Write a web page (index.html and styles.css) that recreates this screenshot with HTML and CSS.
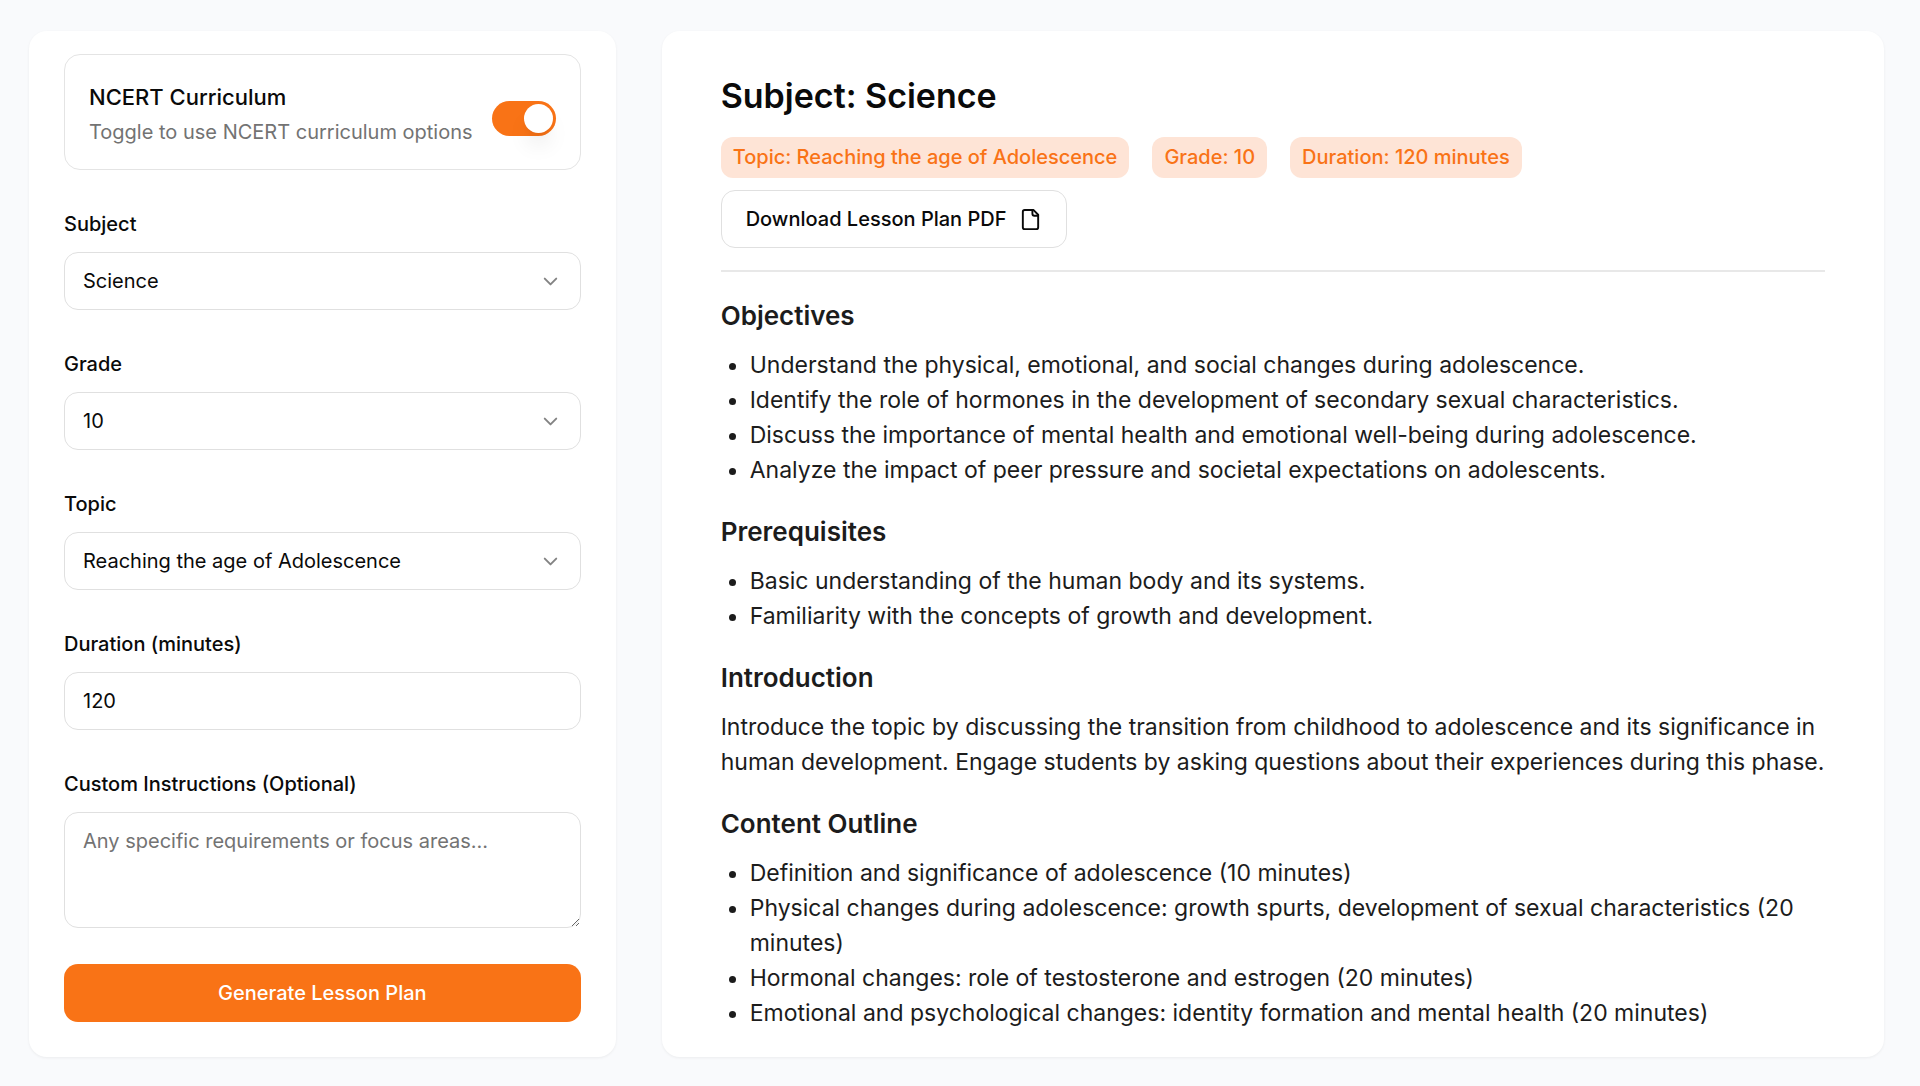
FILE: index.html
```html
<!DOCTYPE html>
<html lang="en">
<head>
    <meta charset="UTF-8">
    <meta name="viewport" content="width=device-width, initial-scale=1.0">
    <title>Lesson Plan Generator</title>
    <link rel="stylesheet" href="styles.css">
</head>
<body>
    <main class="layout">
        <form class="card form-card">
            <div class="curriculum">
                <div>
                    <label class="curriculum-title" for="ncert">NCERT Curriculum</label>
                    <p class="curriculum-hint" id="ncertHint">Toggle to use NCERT curriculum options</p>
                </div>
                <input type="checkbox" role="switch" class="switch" id="ncert" aria-describedby="ncertHint" checked>
            </div>

            <div class="field">
                <label for="subject">Subject</label>
                <div class="select-wrap">
                    <select class="control" id="subject">
                        <option>Science</option>
                    </select>
                    <svg class="chevron" viewBox="0 0 24 24" aria-hidden="true"><path d="m6 9 6 6 6-6"/></svg>
                </div>
            </div>

            <div class="field">
                <label for="grade">Grade</label>
                <div class="select-wrap">
                    <select class="control" id="grade">
                        <option>10</option>
                    </select>
                    <svg class="chevron" viewBox="0 0 24 24" aria-hidden="true"><path d="m6 9 6 6 6-6"/></svg>
                </div>
            </div>

            <div class="field">
                <label for="topic">Topic</label>
                <div class="select-wrap">
                    <select class="control" id="topic">
                        <option>Reaching the age of Adolescence</option>
                    </select>
                    <svg class="chevron" viewBox="0 0 24 24" aria-hidden="true"><path d="m6 9 6 6 6-6"/></svg>
                </div>
            </div>

            <div class="field">
                <label for="duration">Duration (minutes)</label>
                <input type="number" class="control" id="duration" value="120">
            </div>

            <div class="field">
                <label for="instructions">Custom Instructions (Optional)</label>
                <textarea class="control" id="instructions" placeholder="Any specific requirements or focus areas..."></textarea>
            </div>

            <button type="submit" class="btn btn-primary">Generate Lesson Plan</button>
        </form>

        <article class="card plan">
            <header class="plan-header">
                <h1>Subject: Science</h1>
                <div class="badges">
                    <span class="badge">Topic: Reaching the age of Adolescence</span>
                    <span class="badge">Grade: 10</span>
                    <span class="badge">Duration: 120 minutes</span>
                </div>
                <button type="button" class="btn btn-outline">
                    Download Lesson Plan PDF
                    <svg class="icon" viewBox="0 0 24 24" aria-hidden="true">
                        <path d="M15 2H6a2 2 0 0 0-2 2v16a2 2 0 0 0 2 2h12a2 2 0 0 0 2-2V7Z"/>
                        <path d="M14 2v4a2 2 0 0 0 2 2h4"/>
                    </svg>
                </button>
            </header>

            <section>
                <h2>Objectives</h2>
                <ul>
                    <li>Understand the physical, emotional, and social changes during adolescence.</li>
                    <li>Identify the role of hormones in the development of secondary sexual characteristics.</li>
                    <li>Discuss the importance of mental health and emotional well-being during adolescence.</li>
                    <li>Analyze the impact of peer pressure and societal expectations on adolescents.</li>
                </ul>
            </section>

            <section>
                <h2>Prerequisites</h2>
                <ul>
                    <li>Basic understanding of the human body and its systems.</li>
                    <li>Familiarity with the concepts of growth and development.</li>
                </ul>
            </section>

            <section>
                <h2>Introduction</h2>
                <p>Introduce the topic by discussing the transition from childhood to adolescence and its significance in human development. Engage students by asking questions about their experiences during this phase.</p>
            </section>

            <section>
                <h2>Content Outline</h2>
                <ul>
                    <li>Definition and significance of adolescence (10 minutes)</li>
                    <li>Physical changes during adolescence: growth spurts, development of sexual characteristics (20 minutes)</li>
                    <li>Hormonal changes: role of testosterone and estrogen (20 minutes)</li>
                    <li>Emotional and psychological changes: identity formation and mental health (20 minutes)</li>
                </ul>
            </section>
        </article>
    </main>
</body>
</html>
```

FILE: styles.css
```css
* {
    box-sizing: border-box;
}

body {
    margin: 0;
    background-color: #f9fafc;
    color: #0a0a0a;
    font-family: Inter, "Noto Sans", sans-serif;
    font-size: 20px;
    line-height: 28px;
}

h1, h2, p, ul {
    margin: 0;
}

.layout {
    display: grid;
    grid-template-columns: 12fr 25fr;
    gap: 46px;
    padding: 31px 36px 29px 29px;
}

.card {
    background-color: #fff;
    border-radius: 18px;
    box-shadow: 0 1px 3px rgba(0, 0, 0, 0.06);
}

/* Form */
.form-card {
    display: flex;
    flex-direction: column;
    padding: 23px 35px 35px;
}

.curriculum {
    display: flex;
    align-items: center;
    justify-content: space-between;
    padding: 25px 24px 19px;
    border: 1px solid #e4e4e4;
    border-radius: 16px;
}

.curriculum-title {
    display: block;
    font-size: 22px;
    font-weight: 500;
    line-height: 35px;
}

.curriculum-hint {
    color: #737373;
    line-height: 35px;
}

.switch {
    appearance: none;
    flex: none;
    display: flex;
    align-items: center;
    width: 64px;
    height: 35px;
    margin: 6px 0 0;
    padding: 3px;
    border-radius: 18px;
    background-color: #d4d4d4;
    cursor: pointer;
}

.switch::before {
    content: "";
    width: 29px;
    height: 29px;
    border-radius: 50%;
    background-color: #fff;
    box-shadow: 0 15px 22px -4px rgba(0, 0, 0, 0.1), 0 6px 9px -6px rgba(0, 0, 0, 0.1);
}

.switch:checked {
    justify-content: flex-end;
    background-color: #f97316;
}

.field {
    display: flex;
    flex-direction: column;
    gap: 14px;
    margin-top: 40px;
}

.field label {
    font-weight: 500;
}

.control {
    appearance: none;
    display: block;
    width: 100%;
    height: 58px;
    padding: 0 18px;
    border: 1px solid #e0e0e0;
    border-radius: 14px;
    background-color: #fff;
    color: inherit;
    font: inherit;
}

textarea.control {
    height: 116px;
    padding: 14px 18px;
    resize: vertical;
}

.control::placeholder {
    color: #737373;
}

input[type="number"]::-webkit-inner-spin-button {
    appearance: none;
}

.select-wrap {
    display: grid;
    align-items: center;
}

.select-wrap > * {
    grid-area: 1 / 1;
}

.chevron, .icon {
    width: 23px;
    height: 23px;
    fill: none;
    stroke: currentColor;
    stroke-width: 2;
    stroke-linecap: round;
    stroke-linejoin: round;
}

.chevron {
    justify-self: end;
    margin-right: 19px;
    opacity: 0.5;
    pointer-events: none;
}

.btn {
    display: inline-flex;
    align-items: center;
    justify-content: center;
    gap: 12px;
    height: 58px;
    padding: 0 24px;
    border: 1px solid transparent;
    border-radius: 14px;
    font: inherit;
    font-size: 20px;
    font-weight: 500;
    cursor: pointer;
}

.btn-primary {
    margin-top: 36px;
    background-color: #f97316;
    color: #fff;
}

.btn-outline {
    border-color: #e0e0e0;
    background-color: #fff;
    color: inherit;
}

/* Lesson plan */
.plan {
    padding: 44px 59px 25px;
    color: #1c1c1c;
    font-size: 23px;
    line-height: 35px;
}

.plan-header {
    display: flex;
    flex-direction: column;
    align-items: flex-start;
    gap: 12px;
    padding-bottom: 22px;
    border-bottom: 2px solid #e8e8e8;
    color: #0a0a0a;
}

h1 {
    margin-bottom: 8px;
    font-size: 34px;
    font-weight: 600;
    line-height: 42px;
}

.badges {
    display: flex;
    flex-wrap: wrap;
    gap: 23px;
}

.badge {
    padding: 3px 12px;
    border-radius: 12px;
    background-color: #fee4d6;
    color: #f97316;
    font-size: 20px;
    font-weight: 500;
}

section {
    margin-top: 26px;
}

h2 {
    margin-bottom: 15px;
    font-size: 26px;
    font-weight: 600;
    line-height: 35px;
}

ul {
    padding-left: 29px;
}

@media (max-width: 1000px) {
    .layout {
        grid-template-columns: 1fr;
    }
}
```
